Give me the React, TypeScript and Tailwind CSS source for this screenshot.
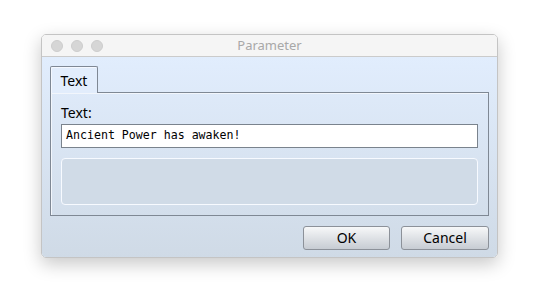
export default function App() {
  const sans = { fontFamily: '"Noto Sans", "DejaVu Sans", sans-serif' };
  return (
    <div className="w-[540px] h-[308px] bg-white pt-[34px] pl-[41px]" style={sans}>
      <div className="w-[457px] h-[224px] flex flex-col rounded-[5px] overflow-hidden border border-[#c4c4c4] shadow-[0_6px_18px_rgba(0,0,0,0.22)]">
        {/* title bar */}
        <div className="h-[22px] shrink-0 grid grid-cols-[1fr_auto_1fr] items-center bg-[#f5f5f5] border-b border-[#cbcbcb] px-[9px]">
          <div className="flex gap-[8px]">
            <span className="w-[12px] h-[12px] rounded-full bg-[#d6d6d6] border border-[#cdcdcd]" />
            <span className="w-[12px] h-[12px] rounded-full bg-[#d6d6d6] border border-[#cdcdcd]" />
            <span className="w-[12px] h-[12px] rounded-full bg-[#d6d6d6] border border-[#cdcdcd]" />
          </div>
          <div className="text-[13px] leading-none text-[#a8a8a8]">Parameter</div>
          <div />
        </div>

        {/* body */}
        <div className="flex-1 flex flex-col px-[8px] pt-[9px] pb-[10px] bg-gradient-to-b from-[#e1edfd] to-[#cfdae6]">
          <div className="relative z-10 -mb-px w-[48px] h-[27px] flex items-center justify-center border border-b-0 border-[#7f8894] rounded-t-[2px] bg-[#e2edfc] shadow-[inset_1px_1px_0_#f4f8ff] text-[14px] text-black">
            Text
          </div>
          <div className="h-[124px] flex flex-col border border-[#7f8894] shadow-[inset_1px_1px_0_#f2f6fc] px-[10px] pt-[10px]">
            <div className="h-[20px] flex items-center text-[14px] text-black leading-none">Text:</div>
            <div
              className="mt-[1px] h-[24px] flex items-center bg-white border border-[#7a838d] px-[4px] text-[11.6px] text-black"
              style={{ fontFamily: '"DejaVu Sans Mono", monospace' }}
            >
              Ancient Power has awaken!
            </div>
            <div className="mt-[10px] h-[47px] rounded-[4px] border border-[#f7faff] bg-[#d0dbe7]" />
          </div>
          <div className="mt-[10px] flex justify-end gap-[11px]">
            <button className="w-[87px] h-[24px] rounded-[3px] border border-[#8c9199] bg-gradient-to-b from-[#f7f8f9] to-[#c7ccd3] text-[14px] text-black leading-none">
              OK
            </button>
            <button className="w-[88px] h-[24px] rounded-[3px] border border-[#8c9199] bg-gradient-to-b from-[#f7f8f9] to-[#c7ccd3] text-[14px] text-black leading-none">
              Cancel
            </button>
          </div>
        </div>
      </div>
    </div>
  );
}
